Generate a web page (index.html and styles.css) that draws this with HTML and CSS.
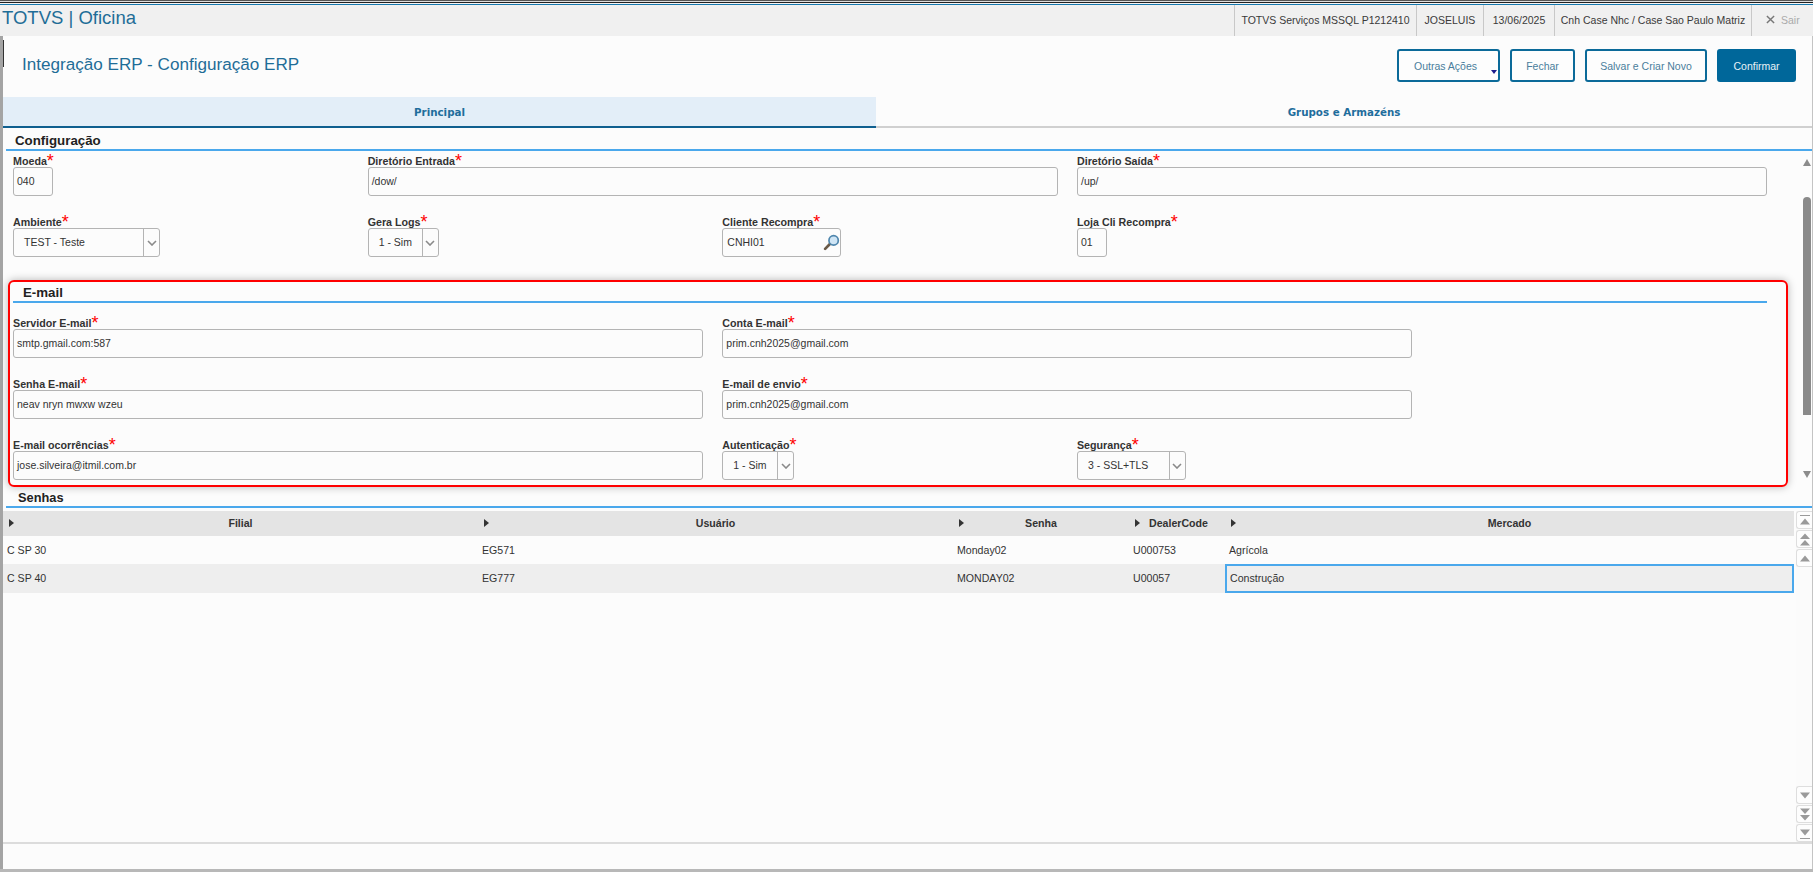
FILE: index.html
```html
<!DOCTYPE html>
<html lang="pt-BR">
<head>
<meta charset="utf-8">
<title>TOTVS | Oficina</title>
<link rel="stylesheet" href="styles.css">
</head>
<body>
<div class="app">
  <div class="topline"></div>
  <header class="appbar">
    <div class="brand">TOTVS | Oficina</div>
    <div class="cell c-env">TOTVS Serviços MSSQL P1212410</div>
    <div class="cell c-user">JOSELUIS</div>
    <div class="cell c-date">13/06/2025</div>
    <div class="cell c-branch">Cnh Case Nhc / Case Sao Paulo Matriz</div>
    <div class="cell c-exit">
      <svg class="x-icon" viewBox="0 0 10 10"><path d="M1 1l8 8M9 1l-8 8"/></svg>
      <span>Sair</span>
    </div>
  </header>
  <div class="toolbar">
    <span class="tick"></span>
    <h1 class="page-title">Integração ERP - Configuração ERP</h1>
    <div class="actions">
      <button class="btn b-more">Outras Ações<span class="caret"></span></button>
      <button class="btn b-close">Fechar</button>
      <button class="btn b-save">Salvar e Criar Novo</button>
      <button class="btn primary b-ok">Confirmar</button>
    </div>
  </div>
  <nav class="tabs">
    <div class="tab active">Principal</div>
    <div class="tab">Grupos e Armazéns</div>
  </nav>
  <main class="panel">
    <h2 class="section-title">Configuração</h2>
    <div class="scrollarea">
      <div class="scrollcontent">
        <div class="form config">
          <div class="field"><label>Moeda<span class="req">*</span></label><div class="box w-moeda">040</div></div>
          <div class="field span2"><label>Diretório Entrada<span class="req">*</span></label><div class="box w-wide">/dow/</div></div>
          <div class="field"><label>Diretório Saída<span class="req">*</span></label><div class="box w-wide">/up/</div></div>
          <div class="field"><label>Ambiente<span class="req">*</span></label>
            <div class="box select w-amb"><span class="val">TEST - Teste</span><span class="arrow"><svg viewBox="0 0 10 6"><path d="M1 1l4 4 4-4"/></svg></span></div></div>
          <div class="field"><label>Gera Logs<span class="req">*</span></label>
            <div class="box select w-sim"><span class="val">1 - Sim</span><span class="arrow"><svg viewBox="0 0 10 6"><path d="M1 1l4 4 4-4"/></svg></span></div></div>
          <div class="field"><label>Cliente Recompra<span class="req">*</span></label>
            <div class="box lookup w-cli"><span>CNHI01</span>
              <svg class="lens" viewBox="0 0 16 16"><path class="lens-handle" d="M6.5 9.5L2 14"/><circle class="lens-glass" cx="10" cy="6" r="4.4"/></svg></div></div>
          <div class="field"><label>Loja Cli Recompra<span class="req">*</span></label><div class="box w-loja">01</div></div>
        </div>
        <section class="email">
          <h2 class="email-title">E-mail</h2>
          <div class="form mail">
            <div class="field span2"><label>Servidor E-mail<span class="req">*</span></label><div class="box w-wide">smtp.gmail.com:587</div></div>
            <div class="field span2"><label>Conta E-mail<span class="req">*</span></label><div class="box w-wide">prim.cnh2025@gmail.com</div></div>
            <div class="field span2"><label>Senha E-mail<span class="req">*</span></label><div class="box w-wide">neav nryn mwxw wzeu</div></div>
            <div class="field span2"><label>E-mail de envio<span class="req">*</span></label><div class="box w-wide">prim.cnh2025@gmail.com</div></div>
            <div class="field span2"><label>E-mail ocorrências<span class="req">*</span></label><div class="box w-wide">jose.silveira@itmil.com.br</div></div>
            <div class="field"><label>Autenticação<span class="req">*</span></label>
              <div class="box select w-aut"><span class="val">1 - Sim</span><span class="arrow"><svg viewBox="0 0 10 6"><path d="M1 1l4 4 4-4"/></svg></span></div></div>
            <div class="field"><label>Segurança<span class="req">*</span></label>
              <div class="box select w-seg"><span class="val">3 - SSL+TLS</span><span class="arrow"><svg viewBox="0 0 10 6"><path d="M1 1l4 4 4-4"/></svg></span></div></div>
          </div>
        </section>
      </div>
      <div class="vscroll">
        <span class="tri up"></span>
        <span class="thumb"></span>
        <span class="tri down"></span>
      </div>
    </div>
    <h2 class="section-title senhas">Senhas</h2>
    <div class="gridwrap">
      <div class="grid">
        <div class="row head">
          <div class="th"><i class="mark"></i><b>Filial</b></div>
          <div class="th"><i class="mark"></i><b>Usuário</b></div>
          <div class="th"><i class="mark"></i><b>Senha</b></div>
          <div class="th"><i class="mark"></i><b>DealerCode</b></div>
          <div class="th"><i class="mark"></i><b>Mercado</b></div>
        </div>
        <div class="row">
          <div class="td">C SP 30</div><div class="td">EG571</div><div class="td">Monday02</div><div class="td">U000753</div><div class="td">Agrícola</div>
        </div>
        <div class="row alt">
          <div class="td">C SP 40</div><div class="td">EG777</div><div class="td">MONDAY02</div><div class="td">U00057</div><div class="td selected">Construção</div>
        </div>
      </div>
      <div class="gridscroll">
        <div class="gs-group">
          <span class="gs"><svg viewBox="0 0 12 12"><path class="bar" d="M1 1h10"/><path d="M6 4l5 6H1z"/></svg></span>
          <span class="gs"><svg viewBox="0 0 12 12"><path d="M6 0l5 5.5H1zM6 6.5l5 5.5H1z"/></svg></span>
          <span class="gs"><svg viewBox="0 0 12 12"><path d="M6 3l5 6H1z"/></svg></span>
        </div>
        <div class="gs-group">
          <span class="gs"><svg viewBox="0 0 12 12"><path d="M6 9L1 3h10z"/></svg></span>
          <span class="gs"><svg viewBox="0 0 12 12"><path d="M6 5.5L1 0h10zM6 12L1 6.500h10z"/></svg></span>
          <span class="gs"><svg viewBox="0 0 12 12"><path d="M6 8L1 2h10z"/><path class="bar" d="M1 11h10"/></svg></span>
        </div>
      </div>
    </div>
  </main>
  <footer class="statusbar"></footer>
</div>
</body>
</html>
```
FILE: styles.css
```css
* { box-sizing: border-box; }
html, body { margin: 0; height: 100%; overflow: hidden; }
body { background: #fcfcfc; font-family: "Liberation Sans", Arial, sans-serif; color: #333; }
.app { height: 872px; display: flex; flex-direction: column; border-left: 3px solid #a4a4a4; border-right: 1px solid #c4c4c4; background: #fcfcfc; }

.topline { height: 5px; margin-left: -3px; margin-right: -1px; flex: none;
  background: linear-gradient(to bottom, #555 0 1px, #ddd 1px 2px, #222 2px 3px, #f4f4f4 3px 4px, #1679ae 4px 5px); }

.appbar { height: 31px; flex: none; display: flex; align-items: stretch; background: #f0f0f0; margin-left: -3px; margin-right: -1px; font-size: 10.5px; color: #3a3a3a; }
.brand { flex: 1; font-size: 18.5px; color: #1f6d97; padding-left: 2px; line-height: 25px; }
.cell { display: flex; align-items: center; justify-content: center; border-left: 1px solid #c8c8c8; padding-bottom: 2px; }
.c-env { width: 182px; }
.c-user { width: 67px; }
.c-date { width: 71px; }
.c-branch { width: 197px; }
.c-exit { width: 62px; gap: 6px; color: #aaa; justify-content: flex-start; padding-left: 14px; }
.x-icon { width: 9px; height: 9px; fill: none; stroke: #777; stroke-width: 1.6; }

.toolbar { height: 61px; flex: none; display: flex; align-items: center; position: relative; }
.tick { position: absolute; left: 0; top: 4px; width: 1px; height: 27px; background: #333; }
.page-title { margin: 0 0 4px 19px; font-size: 17.1px; font-weight: 400; color: #1f6d97; flex: 1; }
.actions { display: flex; gap: 10px; margin-right: 16px; margin-top: -2px; }
.btn { position: relative; height: 33px; border: 2px solid #0b6a99; border-radius: 3px; background: #fdfdfd; color: #4a7d9c; font: 10.5px "Liberation Sans", Arial, sans-serif; padding: 0; }
.b-more { width: 103px; padding-right: 6px; }
.b-close { width: 65px; }
.b-save { width: 122px; }
.b-ok { width: 79px; }
.primary { background: #00679a; color: #e8f2f7; border-color: #00679a; }
.caret { position: absolute; right: 1px; bottom: 6px; border-left: 3.5px solid transparent; border-right: 3.5px solid transparent; border-top: 4px solid #1c1c8c; }

.tabs { height: 31px; flex: none; display: flex; }
.tab { display: flex; align-items: center; justify-content: center; font: 700 10.3px "DejaVu Sans", sans-serif; color: #1f6d9c; border-bottom: 2px solid #d0d0d0; }
.tab:first-child { width: 873px; }
.tab:last-child { flex: 1; }
.tab.active { background: #e3eef8; border-bottom-color: #0f5f8f; }

.panel { flex: 1; display: flex; flex-direction: column; min-height: 0; border-bottom: 2px solid #dcdcdc; }
.section-title { margin: 0 0 0 3px; height: 23px; padding: 5px 0 0 9px; font-size: 13.3px; line-height: 16px; font-weight: 700; color: #222; border-bottom: 2px solid #4aa8ec; flex: none; }
.section-title.senhas { height: 21px; padding-top: 3px; padding-left: 12px; font-size: 12.8px; }

.scrollarea { height: 336px; flex: none; display: flex; }
.scrollcontent { flex: 1; min-width: 0; }
.form { display: grid; grid-template-columns: repeat(4, 354.67px); grid-auto-rows: 41px; row-gap: 20px; }
.config { padding: 4px 0 0 10px; }
.mail { margin-top: 14px; }
.span2 { grid-column: span 2; }
.field label { display: block; height: 12px; padding-left: 0; font-size: 10.7px; line-height: 12px; font-weight: 700; color: #333; white-space: nowrap; }
.req { color: #f00; font-size: 18px; line-height: 10px; font-weight: 400; vertical-align: -2px; }
.box { height: 29px; border: 1px solid #b4b4b4; border-radius: 3px; background: #fcfcfc; font-size: 10.5px; line-height: 27px; padding-left: 3px; color: #333; white-space: nowrap; }
.w-moeda { width: 40px; }
.w-wide { width: 690px; }
.w-amb { width: 147px; }
.w-sim { width: 71px; }
.w-cli { width: 119px; }
.w-loja { width: 30px; }
.w-aut { width: 72px; }
.w-seg { width: 109px; }
.select { display: flex; padding-left: 10px; }
.val { flex: 1; }
.arrow { width: 16px; border-left: 1px solid #b4b4b4; display: flex; align-items: center; justify-content: center; }
.arrow svg { width: 10px; height: 6px; fill: none; stroke: #8a8a8a; stroke-width: 1.6; }
.lookup { display: flex; align-items: center; justify-content: space-between; padding-right: 0; padding-left: 4px; }
.lens { width: 17px; height: 17px; margin-top: -1px; }
.lens-handle { stroke: #6a5a48; stroke-width: 2.6; stroke-linecap: round; fill: none; }
.lens-glass { fill: #cfe5f5; stroke: #4f86ad; stroke-width: 1.6; }

.email { margin: 23px 14px 0 5px; height: 207px; border: 2px solid #f00; border-radius: 6px; padding: 0 3px; box-shadow: 0 0 8px rgba(0,0,0,.28); }
.email-title { margin: 0 16px 0 0; height: 21px; padding: 3px 0 0 10px; font-size: 13.3px; line-height: 16px; font-weight: 700; color: #222; border-bottom: 2px solid #4aa8ec; }

.vscroll { width: 9px; margin-right: 1px; flex: none; display: flex; flex-direction: column; align-items: center; padding-top: 8px; }
.tri { width: 0; height: 0; border-left: 4.5px solid transparent; border-right: 4.500px solid transparent; }
.tri.up { border-bottom: 7px solid #8c8c8c; }
.tri.down { border-top: 7px solid #8c8c8c; margin-top: 56px; }
.thumb { width: 8px; height: 218px; margin-top: 31px; background: #8a8a8a; border-radius: 4px 4px 0 0; }

.gridwrap { flex: 1; display: flex; min-height: 0; padding-top: 3px; }
.grid { width: 1791px; flex: none; font-size: 10.6px; }
.row { display: grid; grid-template-columns: 475px 475px 176px 96px 569px; height: 28px; }
.row.head { height: 25px; background: #e4e4e4; }
.row.alt { height: 29px; background: #eeeeee; }
.th { position: relative; display: flex; align-items: center; justify-content: center; color: #333; padding-bottom: 2px; }
.th b { font-weight: 700; }
.th:nth-child(4) { justify-content: flex-start; padding-left: 20px; }
.mark { position: absolute; left: 6px; top: 8px; border-left: 5px solid #333; border-top: 4px solid transparent; border-bottom: 4px solid transparent; }
.td { padding-left: 4px; line-height: 29px; color: #333; }
.td.selected { border: 2px solid #4aa8ec; line-height: 25px; padding-left: 3px; }

.gridscroll { width: 16px; margin-left: 2px; flex: none; display: flex; flex-direction: column; justify-content: space-between; background: #fbfbfb; }
.gs-group { display: flex; flex-direction: column; gap: 1px; }
.gs { height: 18px; display: flex; align-items: center; justify-content: center; border: 1px solid #dedede; border-right: 0; border-radius: 3px 0 0 3px; background: #fdfdfd; }
.gs svg { width: 12px; height: 13px; fill: #9a9a9a; }
.gs .bar { fill: none; stroke: #9a9a9a; stroke-width: 1; }

.statusbar { height: 28px; flex: none; border-bottom: 3px solid #b8b8b8; margin-left: -3px; margin-right: -1px; }
```
